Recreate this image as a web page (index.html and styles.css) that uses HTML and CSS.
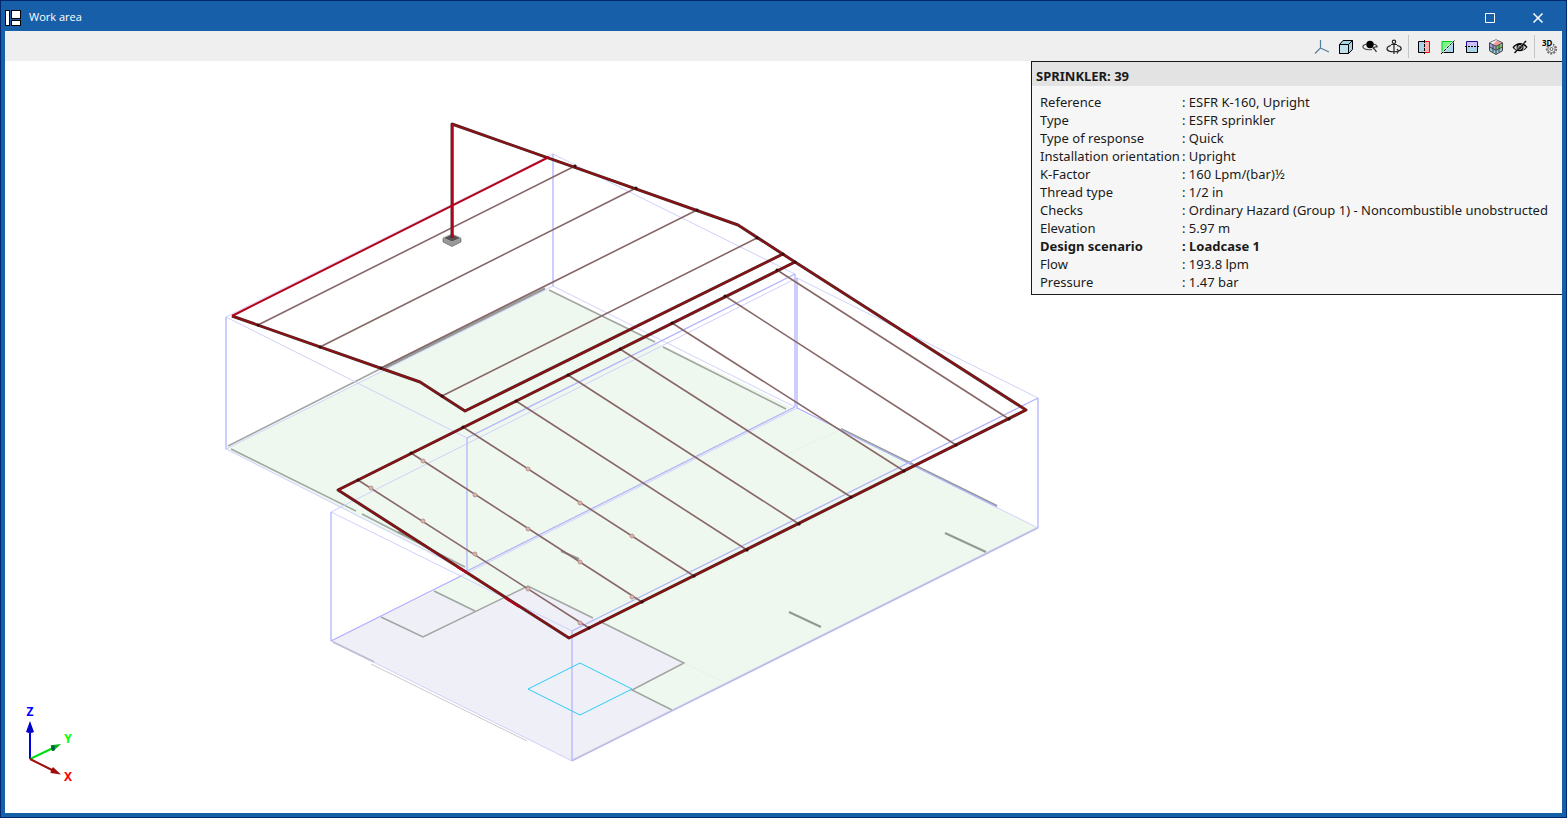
FILE: index.html
```html
<!DOCTYPE html>
<html lang="en">
<head>
<meta charset="utf-8">
<title>Work area</title>
<link rel="stylesheet" href="styles.css">
</head>
<body>
<div class="window">
  <header class="titlebar">
    <svg class="app-icon" viewBox="0 0 16 16" aria-hidden="true"><path fill="#000" d="M0 0h16v16H0z"/><path fill="#185fa9" d="M5 0h1v16H5zM6 9h10v1H6z"/><path fill="#fff" d="M1 1h3v14H1zM7 1h8v7H7zM7 11h8v4H7z"/></svg>
    <h1 class="title">Work area</h1>
    <button class="win-btn" aria-label="Maximize"><svg viewBox="0 0 16 16"><path d="M3.500 3.500h9v9h-9z" fill="none" stroke="#fff"/></svg></button>
    <button class="win-btn" aria-label="Close"><svg viewBox="0 0 16 16"><path d="M3.500 3.500l9 9M12.500 3.500l-9 9" fill="none" stroke="#fff" stroke-width="1.500"/></svg></button>
  </header>
  <div class="toolbar" role="toolbar" aria-label="View">
    <button class="tool" aria-label="Axes"><svg viewBox="0 0 16 16"><path d="M6.500 1v8l-5.500 5.500M6.500 9l8.500 4" fill="none" stroke="#54809a" stroke-width="1.200"/></svg></button>
    <button class="tool" aria-label="Views"><svg viewBox="0 0 16 16"><path d="M1.500 5.500L5 1.500h9.500v9l-4 4h-9z" fill="#a9d5e8" stroke="#000"/><path d="M1.500 5.500h9v9h-9z" fill="#bfe0ec" stroke="#000"/><path d="M10.500 5.500l4-4" stroke="#000"/></svg></button>
    <button class="tool" aria-label="Orbit"><svg viewBox="0 0 16 16"><path d="M5 5C0 6 0 8.500 2.500 9.800c2.500 1.200 5.500 1 7.500.7M11 5c3 .5 5 2 3.800 3.500" fill="none" stroke="#444" stroke-width="1.200"/><circle cx="8" cy="5.500" r="3.700"/><path d="M15 7.500l-4 1.200 1.500 1.500 2 2.600" fill="none" stroke="#333" stroke-width="1.300"/></svg></button>
    <button class="tool" aria-label="Rotate"><svg viewBox="0 0 16 16"><g fill="none" stroke="#222" stroke-width="1.200"><circle cx="8" cy="2.800" r="1.700"/><path d="M8 4.500v10.500M5 5.500h6M5 6.500C0 7.500 0 11 3.500 12.200c1.500.6 6 .9 8 0M11 6.500c5 .8 5.500 4.500 1.500 5.500M11 10l1.500 2-1.500 2.500"/></g></svg></button>
    <span class="sep"></span>
    <button class="tool" aria-label="Section X"><svg viewBox="0 0 16 16"><path d="M8 2.500H2.500v11H8" fill="#a9d5e8" stroke="#000"/><path d="M8 2.500h5.500v11H8" fill="#ffb3b3" stroke="#f00"/><path d="M8.500 1v14" stroke="#000" stroke-dasharray="3 1"/></svg></button>
    <button class="tool" aria-label="Section Y"><svg viewBox="0 0 16 16"><path d="M2 14V2.500h12" fill="#7cf58b" stroke="#00c814"/><path d="M2 13.500h11.500V2" fill="#a9d5e8" stroke="#000"/><path d="M2 14L14 2" stroke="#fff" stroke-width="1.500"/><path d="M1 15L15 1" stroke="#000" stroke-dasharray="3 1"/></svg></button>
    <button class="tool" aria-label="Section Z"><svg viewBox="0 0 16 16"><path d="M2.500 8V2.500h11V8" fill="#cdc2ff" stroke="#1a0f8c"/><path d="M2.500 8v5.500h11V8" fill="#a9d5e8" stroke="#000"/><path d="M1 7.500h14" stroke="#000" stroke-dasharray="2 1"/></svg></button>
    <button class="tool" aria-label="Layers"><svg viewBox="0 0 16 16"><path d="M8 .8l6.500 3v8L8 15.500l-6.500-3.700v-8z" fill="#8fc4d8" stroke="#444"/><path d="M8 1l3 1.500-6 3-3-1.700z" fill="#eee"/><path d="M9 1.500l5 2.500-6 3-3-1.500z" fill="#f49a9a"/><path d="M2 5l6 3v3L2 8z" fill="#a898d8"/><path d="M8 8l6-3v3l-6 3z" fill="#76c94f"/><path d="M1.500 4L8 7.200 14.500 4M1.500 8L8 11.200 14.500 8M8 7v8M5 6v7M11 6v7" fill="none" stroke="#333" stroke-width=".8"/></svg></button>
    <button class="tool" aria-label="Hide"><svg viewBox="0 0 16 16"><path d="M.5 8.500C4 2.500 12 2.500 15.500 8c-3.500 5.500-11.500 5.500-15 .5z"/><path d="M2 8.800c1-1.600 2-2.300 3-2.600-1 2.500 0 4.300.8 5C4 11 3 10 2 8.800zM14 8.300c-1-1.300-2-1.900-3-2.100 1 2 .5 4-.8 5 1.800-.5 2.800-1.500 3.800-2.900z" fill="#ddd"/><circle cx="8" cy="8.300" r="2" fill="none" stroke="#ccc"/><path d="M2.500 14L14 2" stroke="#111" stroke-width="1.500"/><path d="M5 10.500L12 3.200" stroke="#ddd" stroke-width=".6"/></svg></button>
    <span class="sep"></span>
    <button class="tool" aria-label="3D settings"><svg viewBox="0 0 16 16"><g fill="none" stroke="#666"><circle cx="9.500" cy="10" r="4.800" stroke-width="1.600" stroke-dasharray="2 1.300"/><circle cx="9.500" cy="10" r="3.600" stroke-width=".8"/><circle cx="9.500" cy="10" r="1.500"/></g><path d="M0 1h11v6H0z" fill="#efefef"/><text class="icon-3d" x="0" y="7">3D</text></svg></button>
  </div>
  <main class="workspace">
    <svg class="scene" viewBox="5 61 1557 752" preserveAspectRatio="xMinYMin meet" role="img" aria-label="Sprinkler network in three dimensions">
      <g class="floor-green">
        <path d="M226 449L545 289L795 409L840 430L1038 528L672 710L632 690L684 663L528 586L476 611L434 591L465 572Z"/>
      </g>
      <path class="floor-violet" d="M331 641L434 591L476 611L528 586L684 663L632 690L672 710L572 761Z"/>
      <g class="wall">
        <path d="M228 446L382 368L545 288M231 449L356 511M362 514L465 567M549 290L655 342M663 347L786 409"/>
        <path d="M381 617L423 637L528 586L593 618M599 621L684 663L632 690L672 710M434 591L475 611M333 642L374 662"/>
      </g>
      <path class="wall thick" d="M841 429L997 506M945 533L986 552M789 612L821 627M398 532L410 537M561 551L579 559M385 368L545 289"/>
      <path class="wall light" d="M371 664L527 741M572 760L1038 527"/>
      <path class="dotted" d="M788 454L840 430M684 663L726 683"/>
      <g class="edge">
        <path d="M226 317L553 154L795 274M226 317L467 438M226 449L467 571M226 449L553 286L795 407"/>
        <path d="M331 512L797 278L1038 398M331 512L572 631M331 641L797 408L1038 528M331 641L572 761"/>
      </g>
      <g class="edge strong">
        <path d="M226 317V449M553 154V286M467 438V571M795 274V407M331 512V641M572 631V761M797 278V408M1038 398V528"/>
        <path d="M467 438L795 274M467 571L795 407M572 631L1038 398M572 761L1038 528M331 641L461 576M797 408L997 507"/>
      </g>
      <path class="selection" d="M528 689L580 663L632 689L580 715Z"/>
      <g class="branch">
        <path d="M575 166L258 325M636 188L320 347M697 210L381 368M757 238L442 396"/>
        <path d="M358 480L589 628M411 453L642 602M463 427L694 576M516 401L747 550M568 375L799 524M620 349L851 497M672 323L904 471M725 296L956 445M777 270L1009 419"/>
      </g>
      <g class="heads">
        <circle cx="371" cy="488" r="2"/><circle cx="423" cy="521" r="2"/><circle cx="475" cy="554" r="2"/><circle cx="528" cy="589" r="2"/><circle cx="580" cy="623" r="2"/>
        <circle cx="423" cy="461" r="2"/><circle cx="475" cy="495" r="2"/><circle cx="528" cy="529" r="2"/><circle cx="580" cy="562" r="2"/><circle cx="632" cy="597" r="2"/>
        <circle cx="528" cy="469" r="2"/><circle cx="580" cy="503" r="2"/><circle cx="632" cy="536" r="2"/>
      </g>
      <path d="M443 238v4l9 4.500 9-4.500v-4l-9 4z" fill="#999" stroke="#555" stroke-width=".6"/>
      <path d="M443 238l9-4 9 4-9 4z" fill="#555" stroke="#aaa"/>
      <path class="main-shade" d="M452 238V124L738 225L795 262L1026 410L569 638L338 490L795 262M232 316L420 382L465 411L783 254"/>
      <path class="main" d="M452 124L738 225L795 262L1026 410L569 638L338 490L795 262M232 316L420 382L465 411L783 254"/>
      <path class="main bright" d="M549 157L232 316M452.500 124V238M457 567L467 573M505 598L519 607M907 333L914 338"/>
      <path class="tees" d="M575 166h.1M636 188h.1M697 210h.1M757 238h.1M258 325h.1M320 347h.1M381 368h.1M442 396h.1M358 480h.1M411 453h.1M463 427h.1M516 401h.1M568 375h.1M620 349h.1M672 323h.1M725 296h.1M777 270h.1M589 628h.1M642 602h.1M694 576h.1M747 550h.1M799 524h.1M851 497h.1M904 471h.1M956 445h.1M1009 419h.1M783 254h.1M795 262h.1"/>
      <g class="axes">
        <path d="M30 759V733" stroke="#00d"/><path d="M30 759L52 748.500" stroke="#0d1"/><path d="M30 759L52 770" stroke="#a00d0d"/>
        <path d="M30 721l4 11q-4 2-8 0z" fill="#00c"/><path d="M61 744l-10.500 1.200q1 3 3 5.800z" fill="#0b1"/><ellipse cx="53" cy="748" rx="2" ry="3" fill="#064"/><path d="M61 774.500l-8-7.500q-2 2-2.500 6z" fill="#a00d0d"/>
        <text x="30" y="716" fill="#00f">Z</text><text x="68" y="743" fill="#0f0">Y</text><text x="68" y="781" fill="#f00">X</text>
      </g>
    </svg>
    <section class="panel" aria-labelledby="panel-title">
      <h2 class="panel-title" id="panel-title">SPRINKLER: 39</h2>
      <table class="props">
        <tr><th scope="row">Reference</th><td>: ESFR K-160, Upright</td></tr>
        <tr><th scope="row">Type</th><td>: ESFR sprinkler</td></tr>
        <tr><th scope="row">Type of response</th><td>: Quick</td></tr>
        <tr><th scope="row">Installation orientation</th><td>: Upright</td></tr>
        <tr><th scope="row">K-Factor</th><td>: 160 Lpm/(bar)½</td></tr>
        <tr><th scope="row">Thread type</th><td>: 1/2 in</td></tr>
        <tr><th scope="row">Checks</th><td>: Ordinary Hazard (Group 1) - Noncombustible unobstructed</td></tr>
        <tr><th scope="row">Elevation</th><td>: 5.97 m</td></tr>
        <tr class="strong"><th scope="row">Design scenario</th><td>: Loadcase 1</td></tr>
        <tr><th scope="row">Flow</th><td>: 193.8 lpm</td></tr>
        <tr><th scope="row">Pressure</th><td>: 1.47 bar</td></tr>
      </table>
    </section>
  </main>
</div>
</body>
</html>
```
FILE: styles.css
```css
* { box-sizing: border-box; }
body {
  margin: 0;
  font-family: "Noto Sans", "Open Sans", sans-serif;
  font-size: 13px;
  color: #1a1a1a;
}
.window {
  display: flex;
  flex-direction: column;
  height: 100vh;
  padding: 0 4px 4px;
  background: #185fa9;
  border: 1px solid #00286e;
}
.titlebar {
  display: flex;
  align-items: center;
  flex: none;
  height: 30px;
  padding-top: 4px;
}
.app-icon { width: 16px; height: 16px; }
.title {
  flex: 1;
  margin: 0 0 0 8px;
  font-family: "Open Sans", "Noto Sans", sans-serif;
  font-size: 11px;
  line-height: 16px;
  padding-bottom: 2px;
  font-weight: 400;
  color: #fff;
}
.win-btn, .tool {
  display: flex;
  align-items: center;
  justify-content: center;
  padding: 0;
  border: 0;
  background: none;
}
.win-btn { width: 48px; height: 26px; }
.win-btn svg, .tool svg { width: 16px; height: 16px; }
.tool svg { overflow: visible; }
.toolbar {
  display: flex;
  flex: none;
  justify-content: flex-end;
  height: 30px;
  background: #efefef;
}
.tool { width: 24px; height: 30px; padding-top: 2px; }
.sep {
  width: 1px;
  margin: 4px 3px 3px 2px;
  background: #c4c4c4;
}
.icon-3d { font: bold 8px "Noto Sans", sans-serif; }
.workspace {
  position: relative;
  flex: 1;
  min-height: 0;
  background: #fff;
}
.scene { display: block; width: 100%; height: 100%; fill: none; }
.floor-green { fill: #eef8ef; }
.floor-violet { fill: #efeff8; }
.wall { stroke: #a1a5a1; stroke-width: 1.5; }
.wall.thick { stroke: #929992; stroke-width: 2; }
.wall.light { stroke: #c8c8c8; stroke-width: 1; }
.dotted { stroke: #dce6dd; stroke-dasharray: 1 2; }
.edge { stroke: #d0d0fd; }
.edge.strong { stroke: #b4b4fb; stroke-width: 1.3; }
.selection { stroke: #2dcbfa; }
.branch { stroke: #886767; stroke-width: 1.6; }
.tees { stroke: #300c0c; stroke-width: 3; stroke-linecap: round; }
.heads { fill: #e8b0aa; stroke: #b09a95; }
.main-shade { stroke: #493333; stroke-width: 3; stroke-linejoin: round; }
.main { stroke: #8b1014; stroke-width: 2; stroke-linejoin: round; }
.main.bright { stroke: #b8001a; }
.axes { stroke-width: 2; }
.axes text {
  font: bold 12px "Noto Sans", sans-serif;
  text-anchor: middle;
}
.panel {
  position: absolute;
  top: 0;
  right: 0;
  width: 531px;
  padding-bottom: 3px;
  background: #f6f6f6;
  border: 1px solid #1a1a1a;
  border-right: 0;
}
.panel-title {
  margin: 0 0 7px;
  padding: 4px 4px 0;
  font-size: 13px;
  line-height: 20px;
  background: #e3e3e3;
}
.props { margin-left: 8px; border-collapse: collapse; }
.props th, .props td {
  padding: 0;
  font-weight: 400;
  line-height: 18px;
  text-align: left;
  white-space: nowrap;
}
.props th { width: 142px; }
.props .strong th, .props .strong td { font-weight: 700; }
```
